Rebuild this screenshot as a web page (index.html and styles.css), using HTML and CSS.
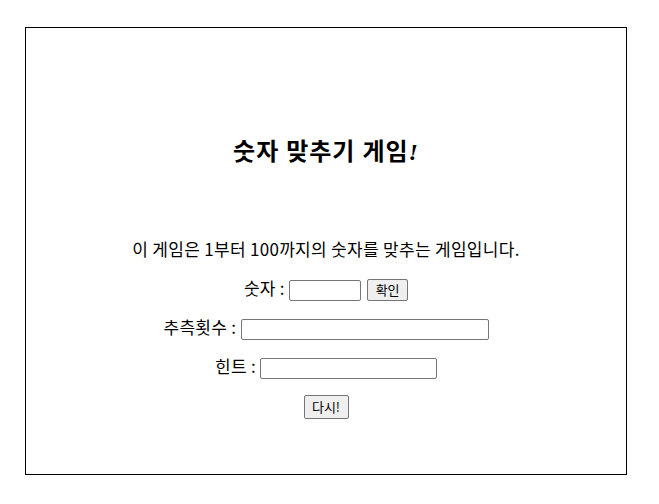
FILE: index.html
```html
<!DOCTYPE html>
<html>
<head>
	<title>숫자 맞추기 게임</title>
	<meta charset="utf-8">
	<meta name="viewport" content="width=device-width, initial-scale=1">
	<link rel="stylesheet" href="styles.css">
</head>
<body>

	<div id="game">
		<h2 id="title">숫자 맞추기 게임<i>!</i></h2>
		<p id="intro">이 게임은 1부터 100까지의 숫자를 맞추는 게임입니다.</p>

		<div class="row">숫자 : <input type="text" class="field" id="guess"> <button class="btn" id="check">확인</button></div>
		<div class="row">추측횟수 : <input type="text" class="field" id="count"></div>
		<div class="row">힌트 : <input type="text" class="field" id="hint"></div>
		<div class="row"><button class="btn" id="reset">다시!</button></div>
	</div>

</body>
</html>
```

FILE: styles.css
```css
* {
	box-sizing: border-box;
}

html, body {
	margin: 0;
	padding: 0;
	background-color: #fff;
}

body {
	font-family: "Noto Sans CJK KR", "Noto Sans", sans-serif;
	font-size: 17px;
	letter-spacing: 0.3px;
	color: #000;
}

#game {
	width: 602px;
	height: 448px;
	margin: 27px 0 0 25px;
	border: 1px solid #000;
	text-align: center;
}

#title {
	margin: 108px 0 0;
	font-family: "Liberation Serif", "Noto Sans CJK KR", serif;
	font-size: 24px;
	letter-spacing: 1px;
	line-height: 32px;
	font-weight: bold;
}

#intro {
	margin: 70px 0 0;
	line-height: 22px;
}

.row {
	margin-top: 16px;
	height: 23px;
	line-height: 23px;
}

.field {
	height: 21px;
	border: 1px solid #767676;
	border-radius: 2px;
	padding: 1px 2px;
	font-size: 13px;
	background: #fff;
	vertical-align: middle;
}

#guess { width: 72px; }
#count { width: 248px; }
#hint { width: 177px; }

.btn {
	height: 22px;
	padding: 0 5px;
	border: 1px solid #767676;
	border-radius: 2px;
	background-color: #efefef;
	font-family: "Noto Sans CJK KR", sans-serif;
	font-size: 13px;
	letter-spacing: 0;
	line-height: 18px;
	color: #000;
	vertical-align: middle;
}

#check {
	width: 41px;
	margin-left: 2px;
}

#reset {
	width: 45px;
	height: 24px;
}
```
